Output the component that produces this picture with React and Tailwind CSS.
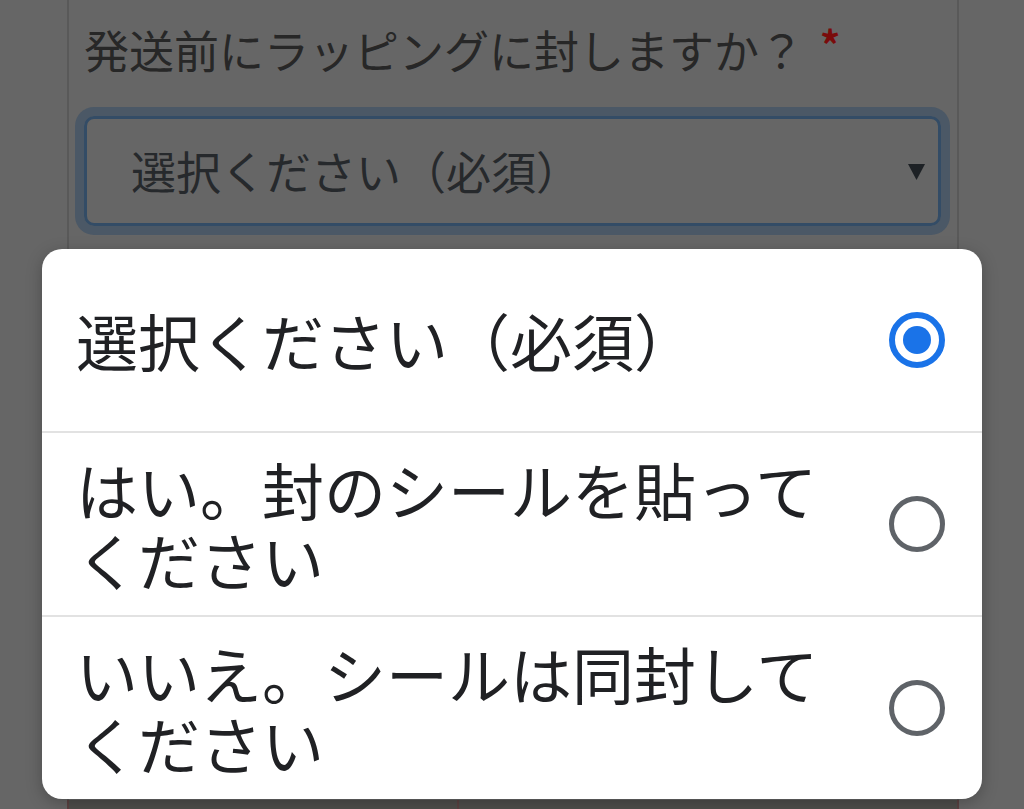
const font = { fontFamily: '"Noto Sans CJK JP", "Noto Sans", sans-serif' };

const options = [
  { label: "選択ください（必須）", checked: true },
  { label: "はい。封のシールを貼ってください", checked: false },
  { label: "いいえ。シールは同封してください", checked: false },
];

function Radio({ checked }) {
  if (checked) {
    return (
      <div className="flex h-[56px] w-[56px] shrink-0 items-center justify-center rounded-full border-[6px] border-[#1a73e8]">
        <div className="h-[28px] w-[28px] rounded-full bg-[#1a73e8]" />
      </div>
    );
  }
  return (
    <div className="h-[56px] w-[56px] shrink-0 rounded-full border-[5px] border-[#5f6368]" />
  );
}

export default function App() {
  return (
    <div
      className="relative h-[809px] w-[1024px] overflow-hidden bg-[#666666]"
      style={font}
    >
      {/* dimmed page behind the picker */}
      <div className="ml-[67px] flex h-full w-[892px] flex-col border-x-2 border-[#595959] pl-[15px] pr-[16px]">
        <div className="mt-[20px] flex h-[60px] shrink-0 items-center text-[45px] leading-[60px] text-[#272727]">
          <span>発送前にラッピングに封しますか？</span>
          <span className="ml-[16px] -mt-[12px] text-[40px] font-bold text-[#7a0b0b]">*</span>
        </div>
        <div className="mt-[36px] flex h-[110px] shrink-0 items-center rounded-[10px] border-[3px] border-[#334c66] pl-[44px] pr-[13px] shadow-[0_0_0_9px_#4b5866]">
          <span className="flex-1 text-[45px] leading-[60px] text-[#26292c]">選択ください（必須）</span>
          <svg width="17" height="17" viewBox="0 0 17 17">
            <polygon points="0,1 17,1 8.5,17" fill="#1d2125" />
          </svg>
        </div>
        <div className="-ml-[17px] -mr-[18px] mt-[574px] grid h-[9px] shrink-0 grid-cols-[392px_1fr] bg-[#4f4e4b]">
          <div className="border-x-2 border-[#5a4242]" />
          <div className="border-r-2 border-[#5a4242]" />
        </div>
      </div>

      {/* option picker */}
      <div className="absolute left-[42px] top-[249px] w-[940px] overflow-hidden rounded-[20px] bg-white shadow-[0_4px_16px_rgba(0,0,0,0.25)]">
        {options.map((o, i) => (
          <div key={i}>
            {i > 0 && <div className="h-[2px] bg-[#e2e2e2]" />}
            <div className="flex min-h-[182px] items-center gap-[40px] pl-[34px] pr-[37px]">
              <div className="flex-1 text-[62px] leading-[70px] text-[#202124]">{o.label}</div>
              <Radio checked={o.checked} />
            </div>
          </div>
        ))}
      </div>
    </div>
  );
}
